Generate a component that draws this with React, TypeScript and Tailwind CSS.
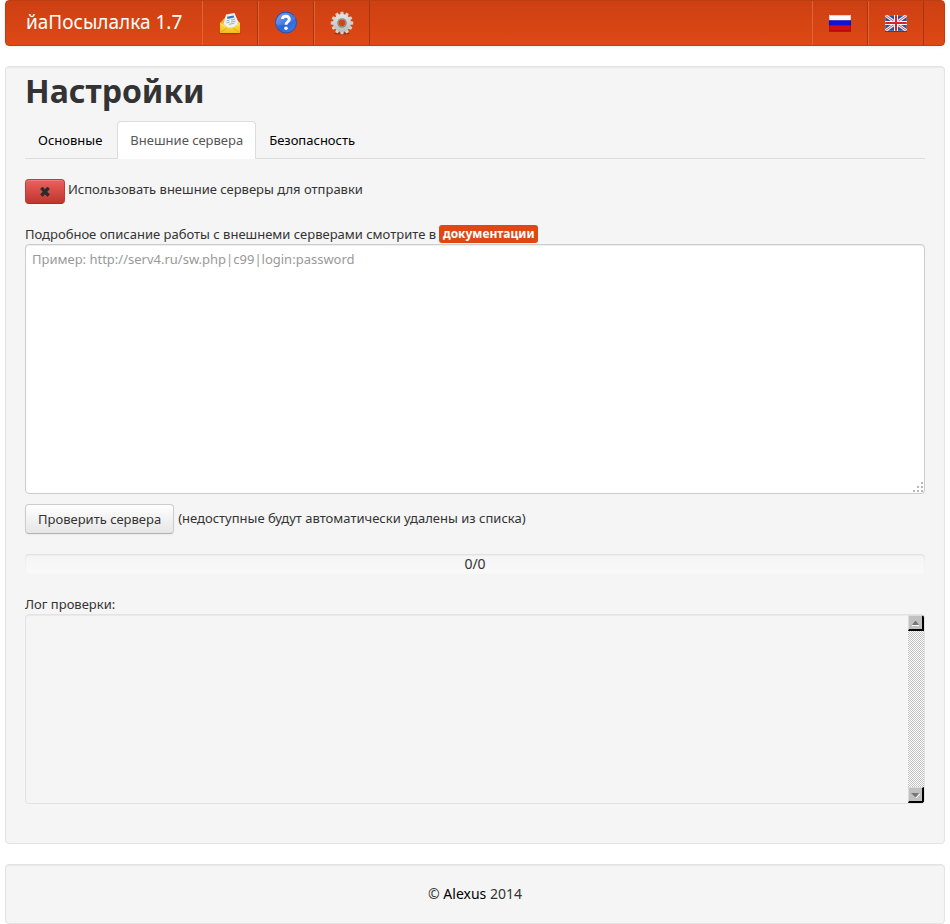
import type { ReactNode } from "react";

const MailIcon = () => (
  <svg width="24" height="24" viewBox="0 0 24 24" aria-hidden="true">
    <defs>
      <linearGradient id="mail" x1="0" y1="0" x2="0" y2="1">
        <stop offset="0" stopColor="#ffe14a" />
        <stop offset="1" stopColor="#f5bb1c" />
      </linearGradient>
    </defs>
    <ellipse cx="12" cy="22.200" rx="11" ry="1" fill="#7a2a08" opacity=".5" />
    <path d="M2 12 7 6.500h10L22 12v10H2z" fill="#f0b428" />
    <path d="m5.500 13 2.500-9.500 8.500-1.500 4 9.500-4.500 5h-6z" fill="#eef1f4" />
    <path d="m9 5.800 6.500-1.300.8 2-6.800 1.500z" fill="#2f78b8" />
    <path d="m8.500 9.800 3-.6M8.500 11.800l3-.6M13 9l4-.8M13 11l4.500-.9M11 13.300l5.500-1.100" stroke="#8aa9c4" strokeWidth=".9" />
    <path d="M2 12 9.500 16.500h5L22 12v10H2z" fill="url(#mail)" />
    <path d="m2.500 21.500 7-5h5l7 5" fill="none" stroke="#d9a01a" strokeWidth=".7" />
    <path d="M2 12 9.500 16.500h5L22 12" fill="none" stroke="#fff0a0" strokeWidth=".8" />
  </svg>
);

const HelpIcon = () => (
  <svg width="24" height="24" viewBox="0 0 24 24" aria-hidden="true">
    <defs>
      <linearGradient id="help" x1="0" y1="0" x2="1" y2="1">
        <stop offset="0" stopColor="#6aa0f4" />
        <stop offset=".5" stopColor="#2d63d6" />
        <stop offset="1" stopColor="#3f83f2" />
      </linearGradient>
    </defs>
    <circle cx="12" cy="11.500" r="10.500" fill="url(#help)" stroke="#2450b4" strokeWidth="1" />
    <path d="M1.800 13C6 15 14 14 22 7A11 11 0 0 0 1.800 13z" fill="#fff" opacity=".13" />
    <path d="M8.500 8C8.800 4.300 15.500 4.500 15.300 8.300c0 2.700-3.300 2.400-3.300 5.400" fill="none" stroke="#fff" strokeWidth="3" />
    <circle cx="12" cy="17.200" r="1.800" fill="#fff" />
  </svg>
);

const teeth = [0, 30, 60, 90, 120, 150, 180, 210, 240, 270, 300, 330];

const GearIcon = () => (
  <svg width="24" height="24" viewBox="0 0 24 24" aria-hidden="true">
    <defs>
      <linearGradient id="gear" x1="0" y1="0" x2="0" y2="24" gradientUnits="userSpaceOnUse">
        <stop offset="0" stopColor="#ececea" />
        <stop offset="1" stopColor="#b4b4b2" />
      </linearGradient>
    </defs>
    <ellipse cx="12" cy="22.500" rx="8" ry="1.200" fill="#6b2408" opacity=".6" />
    <g fill="#d2d2d0">
      {teeth.map((angle) => (
        <path key={angle} d="M10 5 10.600.8h2.800L14 5z" transform={`rotate(${angle} 12 12)`} />
      ))}
    </g>
    <circle cx="12" cy="12" r="6.200" fill="none" stroke="url(#gear)" strokeWidth="5.600" />
    <circle cx="12" cy="12" r="4" fill="none" stroke="#8b8b88" strokeWidth="1.600" />
  </svg>
);

const RussianFlag = () => (
  <svg width="24" height="24" viewBox="0 0 24 24" aria-hidden="true">
    <path d="M1 20.500h22" stroke="#8e2b0b" strokeWidth="1" />
    <path d="M1 4h22v5.500H1z" fill="#f6f6f6" />
    <path d="M1 9.300h22v5.500H1z" fill="#1010e0" />
    <path d="M1 14.600h22V20H1z" fill="#d40d0d" />
    <path d="M1.500 4.500h21v15h-21z" fill="none" stroke="#000" opacity=".14" />
    <path d="M2 5h20v4H2z" fill="#fff" opacity=".5" />
  </svg>
);

const BritishFlag = () => (
  <svg width="24" height="24" viewBox="0 0 24 24" aria-hidden="true">
    <path d="M1 20.500h22" stroke="#8e2b0b" strokeWidth="1" />
    <svg x="1" y="4" width="22" height="16" viewBox="0 0 22 16">
      <path d="M0 0h22v16H0z" fill="#2a549c" />
      <path d="m0 0 22 16M22 0 0 16" stroke="#f1f1f4" strokeWidth="3" />
      <path d="m0 0 22 16M22 0 0 16" stroke="#d8545a" strokeWidth="1" />
      <path d="M11 0v16M0 8h22" stroke="#f6f6f8" strokeWidth="4" />
      <path d="M11 0v16M0 8h22" stroke="#d5232c" strokeWidth="2" />
      <path d="M.5.500h21v15H.5z" fill="none" stroke="#fff" opacity=".2" />
    </svg>
  </svg>
);

const NavItem = ({ label, children }: { label: string; children: ReactNode }) => (
  <a
    href="#"
    aria-label={label}
    className="flex items-center border-l border-r border-l-[#e36339] border-r-[#a83710] px-[15px]"
  >
    {children}
  </a>
);

const panel = "rounded-[4px] border border-[#e3e3e3] bg-[#f5f5f5] px-[19px] shadow-[inset_0_1px_1px_rgba(0,0,0,0.05)]";

const scrollButton =
  "flex size-4 items-center justify-center border-t border-l border-r-2 border-b-2 border-t-[#dcdcdc] border-l-[#dcdcdc] border-r-black border-b-black bg-[#c0c0c0]";

export default function App() {
  return (
    <div className="bg-white px-[5px] font-['Noto_Sans','Open_Sans',sans-serif] text-[13px] leading-5 text-[#333]">
      <nav className="flex h-[46px] rounded-[4px] border border-[#bc3d12] bg-gradient-to-b from-[#cd4013] to-[#de4815] shadow-[0_1px_4px_rgba(0,0,0,0.07)]">
        <a href="#" className="flex w-[196px] items-center pb-[2px] pl-5 text-[19px] whitespace-nowrap text-white">
          йаПосылалка 1.7
        </a>
        <NavItem label="Почта"><MailIcon /></NavItem>
        <NavItem label="Помощь"><HelpIcon /></NavItem>
        <NavItem label="Настройки"><GearIcon /></NavItem>
        <div className="ml-auto flex pr-5">
          <NavItem label="Русский"><RussianFlag /></NavItem>
          <NavItem label="English"><BritishFlag /></NavItem>
        </div>
      </nav>

      <main className={`mt-5 pt-1 pb-[39px] ${panel}`}>
        <h1 className="text-[32px] leading-10 font-bold">Настройки</h1>
        <div role="tablist" className="mt-[10px] flex border-b border-[#ddd] leading-5">
          <button type="button" role="tab" aria-selected="false" className="mr-[2px] px-[13px] text-black">Основные</button>
          <button type="button" role="tab" aria-selected="true" className="-mb-px h-[38px] rounded-t-[4px] border border-b-0 border-[#ddd] bg-white px-3 pb-[2px] text-[#555]">
            Внешние сервера
          </button>
          <button type="button" role="tab" aria-selected="false" className="px-[13px] text-black">Безопасность</button>
        </div>

        <div className="mt-5 flex gap-[3px]">
          <button
            type="button"
            aria-labelledby="external-label"
            className="flex h-[25px] w-10 items-center justify-center rounded-[4px] border border-[#c33b36] border-b-[#a52d29] bg-gradient-to-b from-[#ee5f5b] to-[#bd362f] shadow-[inset_0_1px_0_rgba(255,255,255,0.2)]"
          >
            <svg width="12" height="12" viewBox="0 0 12 12" aria-hidden="true">
              <path d="m1.500 3 2-2L6 3.500 8.500 1l2 2L8 5.800l2.500 2.700-2 2L6 8l-2.500 2.500-2-2L4 5.800z" fill="#2b2b2b" stroke="#2b2b2b" strokeWidth=".6" strokeLinejoin="round" />
            </svg>
          </button>
          <span id="external-label">Использовать внешние серверы для отправки</span>
        </div>

        <div className="mt-5 flex h-5 items-center gap-[3px]">
          <label htmlFor="servers">Подробное описание работы с внешнеми серверами смотрите в</label>
          <a href="#" className="rounded-[3px] bg-[#dd4814] px-1 text-[12px] leading-[18px] font-bold text-white">документации</a>
        </div>
        <div className="relative">
          <textarea
            id="servers"
            placeholder="Пример: http://serv4.ru/sw.php|c99|login:password"
            className="block h-[250px] w-full resize-none rounded-[4px] border border-[#ccc] bg-white px-[6px] py-1 shadow-[inset_0_1px_1px_rgba(0,0,0,0.075)] placeholder:text-[#999]"
          />
          <svg className="absolute right-px bottom-px" width="12" height="12" viewBox="0 0 12 12" aria-hidden="true">
            <path d="M9 1h2v2H9zM5 5h2v2H5zM9 5h2v2H9zM1 9h2v2H1zM5 9h2v2H5zM9 9h2v2H9z" fill="#b8b8b8" />
          </svg>
        </div>

        <div className="mt-[10px] flex gap-1">
          <button type="button" className="h-[30px] rounded-[4px] border border-[#ccc] border-b-[#b3b3b3] bg-gradient-to-b from-white to-[#e6e6e6] px-3 shadow-[0_1px_2px_rgba(0,0,0,0.05)]">
            Проверить сервера
          </button>
          <span className="pt-1">(недоступные будут автоматически удалены из списка)</span>
        </div>

        <div
          role="progressbar"
          aria-valuenow={0}
          aria-label="Проверка"
          className="mt-5 h-5 rounded-[4px] bg-gradient-to-b from-[#f5f5f5] to-[#f9f9f9] text-center text-[14px] leading-5 shadow-[inset_0_1px_2px_rgba(0,0,0,0.1)]"
        >
          0/0
        </div>

        <label htmlFor="log" className="mt-5 block">Лог проверки:</label>
        <div className="flex h-[190px] overflow-hidden rounded-[4px] border border-[#e3e3e3] shadow-[inset_0_1px_1px_rgba(0,0,0,0.05)]">
          <textarea id="log" readOnly className="flex-1 resize-none bg-transparent px-[6px] py-1" />
          <div className="flex w-4 flex-col justify-between bg-[repeating-conic-gradient(#c0c0c0_0_25%,#fff_0_50%)] bg-[length:2px_2px]">
            <button type="button" aria-label="Вверх" className={scrollButton}>
              <svg width="9" height="6" viewBox="0 0 9 6" aria-hidden="true"><path d="M1 5h7v1H1z" fill="#fff" /><path d="M4 1h1l3 4H1z" fill="#777" /></svg>
            </button>
            <button type="button" aria-label="Вниз" className={scrollButton}>
              <svg width="9" height="6" viewBox="0 0 9 6" aria-hidden="true"><path d="m9 2-4 4" stroke="#fff" /><path d="M0 1h8L5 5H4z" fill="#777" /></svg>
            </button>
          </div>
        </div>
      </main>

      <footer className={`mt-5 py-[19px] text-center text-[14px] leading-5 ${panel}`}>
        © <a href="#" className="text-black">Alexus</a> 2014
      </footer>
    </div>
  );
}
